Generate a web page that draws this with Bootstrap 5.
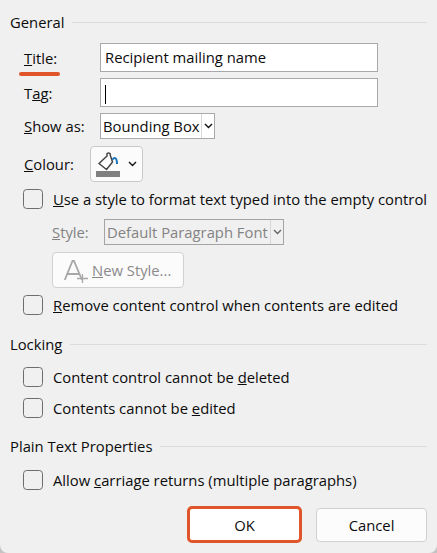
<!DOCTYPE html>
<html lang="en"><head><meta charset="utf-8"><title>Content Control Properties</title>
<link href="https://cdn.jsdelivr.net/npm/bootstrap@5.3.0/dist/css/bootstrap.min.css" rel="stylesheet">
<style>
html,body{height:553px;overflow:hidden}
body{background:#c4c4c4;color:#0c0c0c;font-family:"Open Sans","Noto Sans",sans-serif;font-size:14.8px;line-height:20px}
.dlg{width:437px;height:553px;padding:12px 10px 0 10px;background:#f0f0f0;border-radius:0 0 8px 8px}
.grp{height:20px}
.grp-line{height:1px;background:#dcdcdc;margin-left:8px}
.lbl{width:76px;margin-left:14px;flex:none;position:relative}
.fld-row{height:29px;margin-bottom:6px}
.first-row{margin-top:11px}
.fld{width:278px;height:29px;background:#fff;border:1px solid #a9a9ad;padding:2px 4px;line-height:23px;color:#0c0c0c}
.cursor{display:inline-block;width:1px;height:19px;background:#000;vertical-align:middle}
.mark-line{position:absolute;left:-5px;top:24px;width:41px;height:4px;background:#e0562a;border-radius:2px}
.sel-row{height:26px;margin-bottom:7px}
.sel{height:26px;background:#fff;border:1px solid #a9a9ad;padding-left:2px;line-height:22px;width:115px}
.sel-t{flex:1;overflow:hidden;white-space:nowrap}
.sel-bar{width:1px;height:24px;background:#d8d8d8;flex:none}
.sel-c{width:12px;flex:none;display:flex;justify-content:center;align-items:center}
.clr-row{height:36px;margin-bottom:7px}
.clr{width:53px;height:36px;background:#fbfbfb;border:1px solid #c9c9c9;border-radius:4px;margin-left:-10px;padding:0 0 0 5px}
.chk{width:20px;height:20px;margin:0;flex:none;background:transparent;border:1px solid #6d6d6d;border-radius:4px}
.opt{height:20px;margin-left:13px;gap:10px;white-space:nowrap}
.dis{color:#838383}
.style-row{height:26px;margin-top:10px;margin-left:42px}
.style-lbl{width:52px}
.sel.dis-sel{width:180px;background:#f0f0f0;border-color:#a4a4a4}
.newst{width:132px;height:36px;background:#fbfbfb;border:1px solid #d0d0d0;border-radius:4px;padding:0 0 0 11px;color:#8a8a8a;font-size:14.8px;margin-left:42px;margin-top:7px}
.opt-remove{margin-top:7px}
.grp-next{margin-top:19px}
.grp-last{margin-top:18px}
.opt-a{margin-top:13px}
.opt-c{margin-top:14px}
.opt-b{margin-top:11px}
.act{width:111px;height:34px;background:#fcfcfc;border:1px solid #d0d0d0;border-radius:4px;padding:0;color:#0c0c0c;font-size:14.8px}
.act-ok{width:115px;height:37px;border:3px solid #e0562a;border-radius:5px;background:#fff}
.acts{gap:14px;margin-top:16px}
</style></head><body>
<div class="dlg">
 <div class="d-flex align-items-center grp"><span>General</span><div class="grp-line flex-fill"></div></div>
 <div class="d-flex align-items-center fld-row first-row"><div class="lbl"><u>T</u>itle:<span class="mark-line"></span></div><div class="fld">Recipient mailing name</div></div>
 <div class="d-flex align-items-center fld-row"><div class="lbl">T<u>a</u>g:</div><div class="fld"><span class="cursor"></span></div></div>
 <div class="d-flex align-items-center sel-row"><div class="lbl"><u>S</u>how as:</div>
  <div class="sel d-flex align-items-center"><span class="sel-t">Bounding Box</span><span class="sel-bar"></span><span class="sel-c"><svg width="9" height="6" viewBox="0 0 9 6"><path d="M1 1l3.500 3.500L8 1" fill="none" stroke="#111" stroke-width="1.4"/></svg></span></div></div>
 <div class="d-flex align-items-center clr-row"><div class="lbl"><u>C</u>olour:</div>
  <button class="clr d-flex align-items-center" type="button" aria-label="Colour">
   <svg width="24" height="25" viewBox="0 0 24 25"><path d="M3 11.500L11 4V1.500Q12.500 .5 14 1.500L14.500 4 16.500 10 10.500 17.500z" fill="#fff" stroke="#444" stroke-width="1.5" stroke-linejoin="round"/><path d="M16.500 8C17.500 5 21 4.500 21 12" fill="none" stroke="#1b75bc" stroke-width="2"/><rect y="19" width="24" height="6" fill="#808080"/></svg>
   <svg class="ms-2" width="9" height="6" viewBox="0 0 9 6"><path d="M1 1l3.500 3.500L8 1" fill="none" stroke="#111" stroke-width="1.4"/></svg>
  </button></div>
 <div class="d-flex align-items-center opt"><input class="form-check-input chk" type="checkbox" id="c1"><label for="c1"><u>U</u>se a style to format text typed into the empty control</label></div>
 <div class="d-flex align-items-center style-row"><div class="dis style-lbl"><u>S</u>tyle:</div>
  <div class="sel dis-sel d-flex align-items-center dis"><span class="sel-t">Default Paragraph Font</span><span class="sel-bar"></span><span class="sel-c"><svg width="9" height="6" viewBox="0 0 9 6"><path d="M1 1l3.500 3.500L8 1" fill="none" stroke="#666" stroke-width="1.4"/></svg></span></div></div>
 <button class="newst d-flex align-items-center" type="button"><svg class="me-1" width="24" height="26" viewBox="0 0 24 26"><path d="M.8 23L8.500 4h1.500L18 23M3.500 17h12" fill="none" stroke="#a8a8a8" stroke-width="1.800"/><path d="M18.500 17v9M13 21.500h11" stroke="#a8a8a8" stroke-width="1.300"/></svg><span><u>N</u>ew Style...</span></button>
 <div class="d-flex align-items-center opt opt-remove"><input class="form-check-input chk" type="checkbox" id="c2"><label for="c2"><u>R</u>emove content control when contents are edited</label></div>
 <div class="d-flex align-items-center grp grp-next"><span>Locking</span><div class="grp-line flex-fill"></div></div>
 <div class="d-flex align-items-center opt opt-a"><input class="form-check-input chk" type="checkbox" id="c3"><label for="c3">Content control cannot be <u>d</u>eleted</label></div>
 <div class="d-flex align-items-center opt opt-b"><input class="form-check-input chk" type="checkbox" id="c4"><label for="c4">Contents cannot be <u>e</u>dited</label></div>
 <div class="d-flex align-items-center grp grp-last"><span>Plain Text Properties</span><div class="grp-line flex-fill"></div></div>
 <div class="d-flex align-items-center opt opt-c"><input class="form-check-input chk" type="checkbox" id="c5"><label for="c5">Allow <u>c</u>arriage returns (multiple paragraphs)</label></div>
 <div class="d-flex justify-content-end align-items-center acts"><button class="act act-ok" type="button">OK</button><button class="act" type="button">Cancel</button></div>
</div>
</body></html>
